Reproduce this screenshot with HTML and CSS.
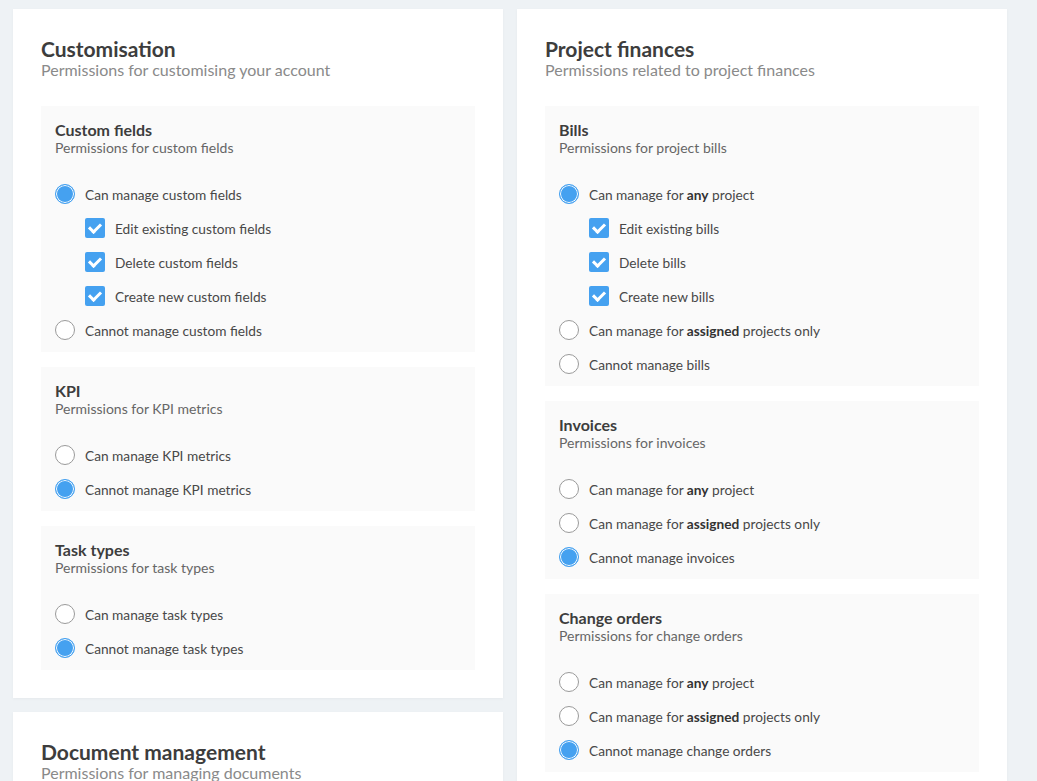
FILE: index.html
```html
<!DOCTYPE html>
<html lang="en">
<head>
    <meta charset="UTF-8">
    <meta name="viewport" content="width=device-width, initial-scale=1.0">
    <title>Permissions</title>
    <link rel="stylesheet" href="styles.css">
</head>
<body>
    <div class="columns">
        <div class="column">
            <div class="card">
                <h2>Customisation</h2>
                <p class="card-sub">Permissions for customising your account</p>

                <div class="group">
                    <h3>Custom fields</h3>
                    <p class="group-sub">Permissions for custom fields</p>
                    <div class="options">
                        <label class="option"><span class="radio checked"></span>Can manage custom fields</label>
                        <label class="option sub"><span class="check"></span>Edit existing custom fields</label>
                        <label class="option sub"><span class="check"></span>Delete custom fields</label>
                        <label class="option sub"><span class="check"></span>Create new custom fields</label>
                        <label class="option"><span class="radio"></span>Cannot manage custom fields</label>
                    </div>
                </div>

                <div class="group">
                    <h3>KPI</h3>
                    <p class="group-sub">Permissions for KPI metrics</p>
                    <div class="options">
                        <label class="option"><span class="radio"></span>Can manage KPI metrics</label>
                        <label class="option"><span class="radio checked"></span>Cannot manage KPI metrics</label>
                    </div>
                </div>

                <div class="group">
                    <h3>Task types</h3>
                    <p class="group-sub">Permissions for task types</p>
                    <div class="options">
                        <label class="option"><span class="radio"></span>Can manage task types</label>
                        <label class="option"><span class="radio checked"></span>Cannot manage task types</label>
                    </div>
                </div>
            </div>

            <div class="card">
                <h2>Document management</h2>
                <p class="card-sub">Permissions for managing documents</p>
            </div>
        </div>

        <div class="column">
            <div class="card">
                <h2>Project finances</h2>
                <p class="card-sub">Permissions related to project finances</p>

                <div class="group">
                    <h3>Bills</h3>
                    <p class="group-sub">Permissions for project bills</p>
                    <div class="options">
                        <label class="option"><span class="radio checked"></span>Can manage for&nbsp;<b>any</b>&nbsp;project</label>
                        <label class="option sub"><span class="check"></span>Edit existing bills</label>
                        <label class="option sub"><span class="check"></span>Delete bills</label>
                        <label class="option sub"><span class="check"></span>Create new bills</label>
                        <label class="option"><span class="radio"></span>Can manage for&nbsp;<b>assigned</b>&nbsp;projects only</label>
                        <label class="option"><span class="radio"></span>Cannot manage bills</label>
                    </div>
                </div>

                <div class="group">
                    <h3>Invoices</h3>
                    <p class="group-sub">Permissions for invoices</p>
                    <div class="options">
                        <label class="option"><span class="radio"></span>Can manage for&nbsp;<b>any</b>&nbsp;project</label>
                        <label class="option"><span class="radio"></span>Can manage for&nbsp;<b>assigned</b>&nbsp;projects only</label>
                        <label class="option"><span class="radio checked"></span>Cannot manage invoices</label>
                    </div>
                </div>

                <div class="group">
                    <h3>Change orders</h3>
                    <p class="group-sub">Permissions for change orders</p>
                    <div class="options">
                        <label class="option"><span class="radio"></span>Can manage for&nbsp;<b>any</b>&nbsp;project</label>
                        <label class="option"><span class="radio"></span>Can manage for&nbsp;<b>assigned</b>&nbsp;projects only</label>
                        <label class="option"><span class="radio checked"></span>Cannot manage change orders</label>
                    </div>
                </div>
            </div>
        </div>
    </div>
</body>
</html>
```

FILE: styles.css
```css
body {
    margin: 0;
    background-color: #eef2f5;
    font-family: Lato, "Open Sans", sans-serif;
    color: #444;
}
.columns {
    display: flex;
    gap: 14px;
    padding: 9px 13px;
    align-items: flex-start;
}
.column {
    width: 490px;
    display: flex;
    flex-direction: column;
    gap: 14px;
}
.card {
    background: white;
    padding: 28px 28px 28px;
    box-shadow: 0 1px 3px rgba(0, 0, 0, 0.04);
}
.card h2 {
    margin: 0;
    font-size: 21px;
    line-height: 24px;
    font-weight: 700;
    color: #3d3d3d;
}
.card-sub {
    margin: 0 0 27px;
    font-size: 16px;
    line-height: 18px;
    color: #8a8a8a;
}
.group {
    background-color: #fafafa;
    padding: 15px 14px 5px;
    margin-bottom: 15px;
}
.group:last-child {
    margin-bottom: 0;
}
.group h3 {
    margin: 0;
    font-size: 16px;
    line-height: 18px;
    font-weight: 700;
    color: #3d3d3d;
}
.group-sub {
    margin: 0 0 21px;
    font-size: 14px;
    line-height: 17px;
    color: #666;
}
.option {
    display: flex;
    align-items: center;
    height: 34px;
    font-size: 13.7px;
    color: #484848;
}
.option b {
    font-weight: 700;
    color: #333;
}
.option.sub {
    padding-left: 30px;
}
.radio {
    width: 18px;
    height: 18px;
    border: 1px solid #9a9a9a;
    border-radius: 50%;
    background: white;
    margin-right: 10px;
    flex-shrink: 0;
}
.radio.checked {
    background: #45a1f0;
    border-color: #45a1f0;
    box-shadow: inset 0 0 0 1px white;
}
.check {
    width: 20px;
    height: 20px;
    border-radius: 2px;
    background: #45a1f0;
    margin-right: 10px;
    flex-shrink: 0;
    position: relative;
}
.check::after {
    content: "";
    position: absolute;
    left: 5px;
    top: 3px;
    width: 9px;
    height: 5px;
    border-left: 3px solid white;
    border-bottom: 3px solid white;
    transform: translate(-1px, 2px) rotate(-45deg);
}
```
